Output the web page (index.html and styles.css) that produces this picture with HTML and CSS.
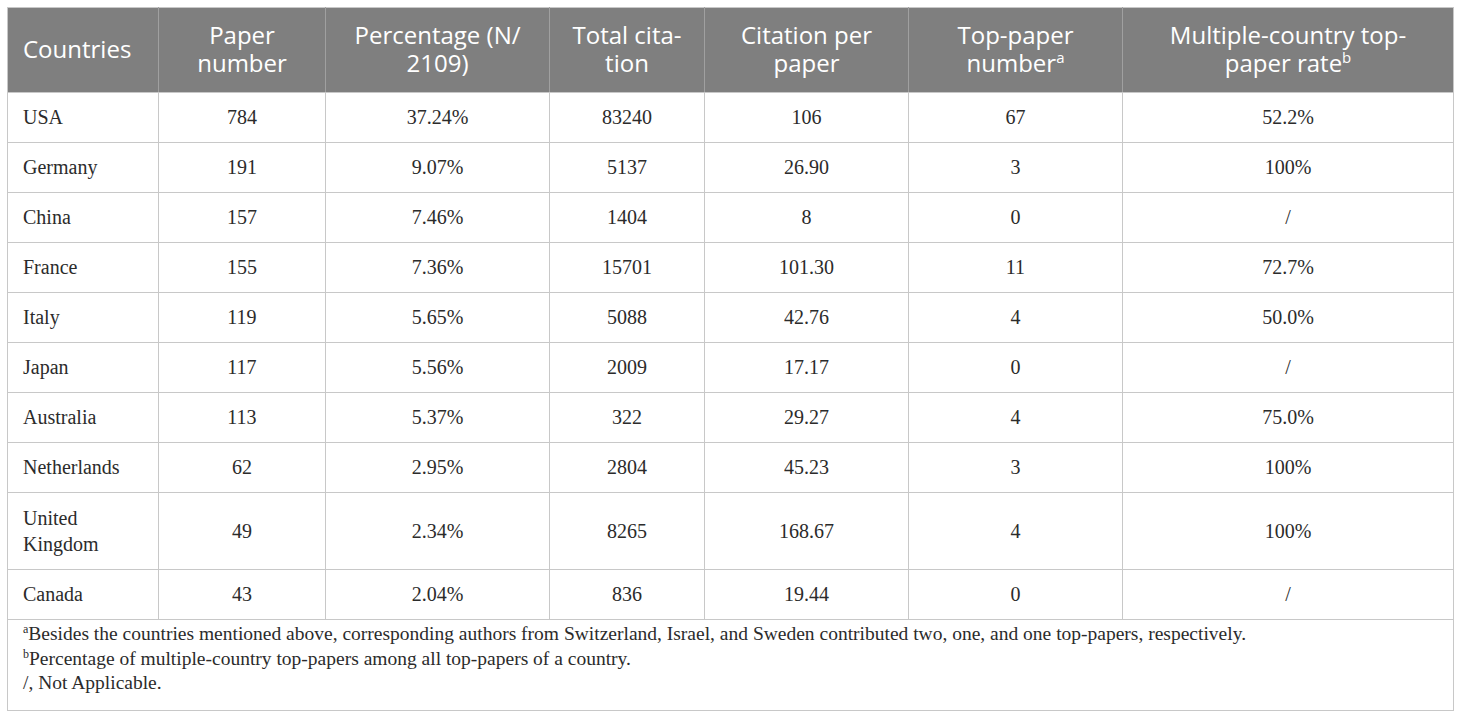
FILE: index.html
```html
<!DOCTYPE html>
<html lang="en">
<head>
    <meta charset="UTF-8">
    <title>Countries table</title>
    <link rel="stylesheet" href="styles.css">
</head>
<body>
    <div class="table-wrap">
        <table class="data-table">
            <colgroup>
                <col class="c1"><col class="c2"><col class="c3"><col class="c4"><col class="c5"><col class="c6"><col class="c7">
            </colgroup>
            <thead>
                <tr>
                    <th class="left">Countries</th>
                    <th>Paper<br>number</th>
                    <th>Percentage (N/<br>2109)</th>
                    <th>Total cita-<br>tion</th>
                    <th>Citation per<br>paper</th>
                    <th>Top-paper<br>number<sup>a</sup></th>
                    <th>Multiple-country top-<br>paper rate<sup>b</sup></th>
                </tr>
            </thead>
            <tbody>
                <tr><td class="left">USA</td><td>784</td><td>37.24%</td><td>83240</td><td>106</td><td>67</td><td>52.2%</td></tr>
                <tr><td class="left">Germany</td><td>191</td><td>9.07%</td><td>5137</td><td>26.90</td><td>3</td><td>100%</td></tr>
                <tr><td class="left">China</td><td>157</td><td>7.46%</td><td>1404</td><td>8</td><td>0</td><td>/</td></tr>
                <tr><td class="left">France</td><td>155</td><td>7.36%</td><td>15701</td><td>101.30</td><td>11</td><td>72.7%</td></tr>
                <tr><td class="left">Italy</td><td>119</td><td>5.65%</td><td>5088</td><td>42.76</td><td>4</td><td>50.0%</td></tr>
                <tr><td class="left">Japan</td><td>117</td><td>5.56%</td><td>2009</td><td>17.17</td><td>0</td><td>/</td></tr>
                <tr><td class="left">Australia</td><td>113</td><td>5.37%</td><td>322</td><td>29.27</td><td>4</td><td>75.0%</td></tr>
                <tr><td class="left">Netherlands</td><td>62</td><td>2.95%</td><td>2804</td><td>45.23</td><td>3</td><td>100%</td></tr>
                <tr class="tall"><td class="left">United<br>Kingdom</td><td>49</td><td>2.34%</td><td>8265</td><td>168.67</td><td>4</td><td>100%</td></tr>
                <tr><td class="left">Canada</td><td>43</td><td>2.04%</td><td>836</td><td>19.44</td><td>0</td><td>/</td></tr>
            </tbody>
            <tfoot>
                <tr>
                    <td colspan="7" class="notes">
                        <p><sup>a</sup>Besides the countries mentioned above, corresponding authors from Switzerland, Israel, and Sweden contributed two, one, and one top-papers, respectively.</p>
                        <p><sup>b</sup>Percentage of multiple-country top-papers among all top-papers of a country.</p>
                        <p>/, Not Applicable.</p>
                    </td>
                </tr>
            </tfoot>
        </table>
    </div>
</body>
</html>
```

FILE: styles.css
```css
body {
    margin: 0;
    padding: 7px;
    background: #fff;
    font-family: "Liberation Serif", "Times New Roman", serif;
    color: #2b2b2b;
}
.data-table {
    width: 1446px;
    border-collapse: collapse;
    table-layout: fixed;
    border: 1px solid #c8c8c8;
}
.c1 { width: 151px; }
.c2 { width: 167px; }
.c3 { width: 224px; }
.c4 { width: 155px; }
.c5 { width: 204px; }
.c6 { width: 214px; }
.c7 { width: 331px; }
.data-table th {
    background-color: #7f7f7f;
    color: #fff;
    font-family: "Open Sans", sans-serif;
    font-weight: normal;
    font-size: 24px;
    line-height: 28px;
    height: 82px;
    padding: 0 8px 2px;
    text-align: center;
    border-left: 1px solid #a0a0a0;
    border-bottom: 1px solid #c8c8c8;
}
.data-table th:first-child {
    border-left: none;
}
.data-table th sup {
    font-size: 15px;
    line-height: 0;
}
.data-table td {
    font-size: 20px;
    height: 49px;
    padding: 0 10px;
    text-align: center;
    border: 1px solid #c8c8c8;
}
.data-table .left {
    text-align: left;
    padding-left: 15px;
}
.data-table tr.tall td {
    height: 76px;
    line-height: 26px;
}
.data-table td.notes {
    text-align: left;
    padding: 2px 15px 14px;
    height: auto;
    font-size: 19.5px;
}
.notes p {
    margin: 0;
    line-height: 24.5px;
}
.notes sup {
    font-size: 12px;
    line-height: 0;
}
```
